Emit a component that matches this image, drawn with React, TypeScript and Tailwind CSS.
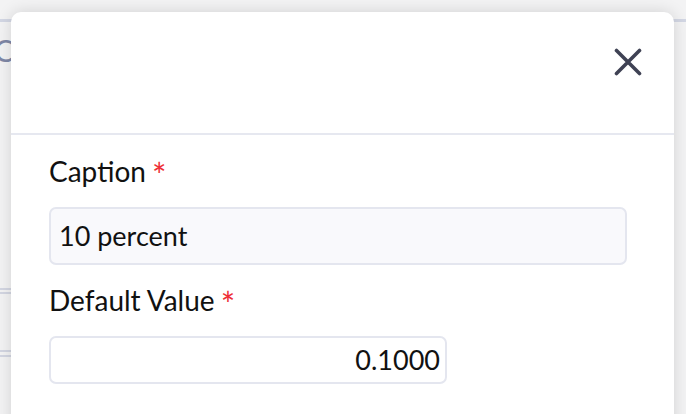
import React from "react";

export default function App() {
  return (
    <div
      className="relative w-[686px] h-[414px] overflow-hidden bg-[#f3f3f4]"
      style={{ fontFamily: "Lato, 'Noto Sans', sans-serif" }}
    >
      {/* backdrop page content */}
      <div className="absolute inset-0 flex flex-col">
        <div className="mt-[19px] w-full h-[3px] bg-[#d3d7e4]" />
        <div className="mt-[8px] ml-[-6px] text-[30px] leading-[40px] text-[#7f87a6]">C</div>
        <div className="mt-[218px] w-[20px] flex flex-col gap-[2px]">
          <div className="h-[2px] bg-[#d3d6e2]" />
          <div className="h-[2px] bg-[#d3d6e2]" />
        </div>
        <div className="mt-[56px] w-[20px] flex flex-col gap-[3px]">
          <div className="h-[2px] bg-[#d3d6e2]" />
          <div className="h-[2px] bg-[#d3d6e2]" />
        </div>
      </div>

      {/* modal */}
      <div className="absolute left-[11px] top-[12px] w-[663px] h-[440px] rounded-[10px] bg-white shadow-[0_0_16px_rgba(0,0,0,0.14)]">
        <div className="h-[123px] border-b-2 border-[#e6e8f0] flex justify-end pr-[32px] pt-[36px]">
          <svg width="28" height="28" viewBox="0 0 28 28" fill="none">
            <path d="M2.5 2.5L25.5 25.5M25.5 2.5L2.5 25.5" stroke="#3f4254" strokeWidth="3.6" strokeLinecap="round" />
          </svg>
        </div>
        <div className="pl-[38px] pt-[19px] flex flex-col">
          <label className="text-[28px] leading-[34px] text-[#111111] flex items-start">
            Caption<span className="ml-[6px] mt-[4px] text-[#ee2e36] text-[34px] leading-[34px]">*</span>
          </label>
          <div className="mt-[15px] w-[578px] h-[58px] rounded-[7px] border-2 border-[#e4e6ef] bg-[#f9f9fc] flex items-center pl-[8px] text-[27px] text-[#111111]">
            10 percent
          </div>
          <label className="mt-[18px] text-[28px] leading-[34px] text-[#111111] flex items-start">
            Default Value<span className="ml-[6px] mt-[4px] text-[#ee2e36] text-[34px] leading-[34px]">*</span>
          </label>
          <div className="mt-[15px] w-[398px] h-[48px] rounded-[7px] border-2 border-[#e4e6ef] bg-white flex items-center justify-end pr-[5px] text-[27px] text-[#111111]">
            0.1000
          </div>
        </div>
      </div>
    </div>
  );
}
